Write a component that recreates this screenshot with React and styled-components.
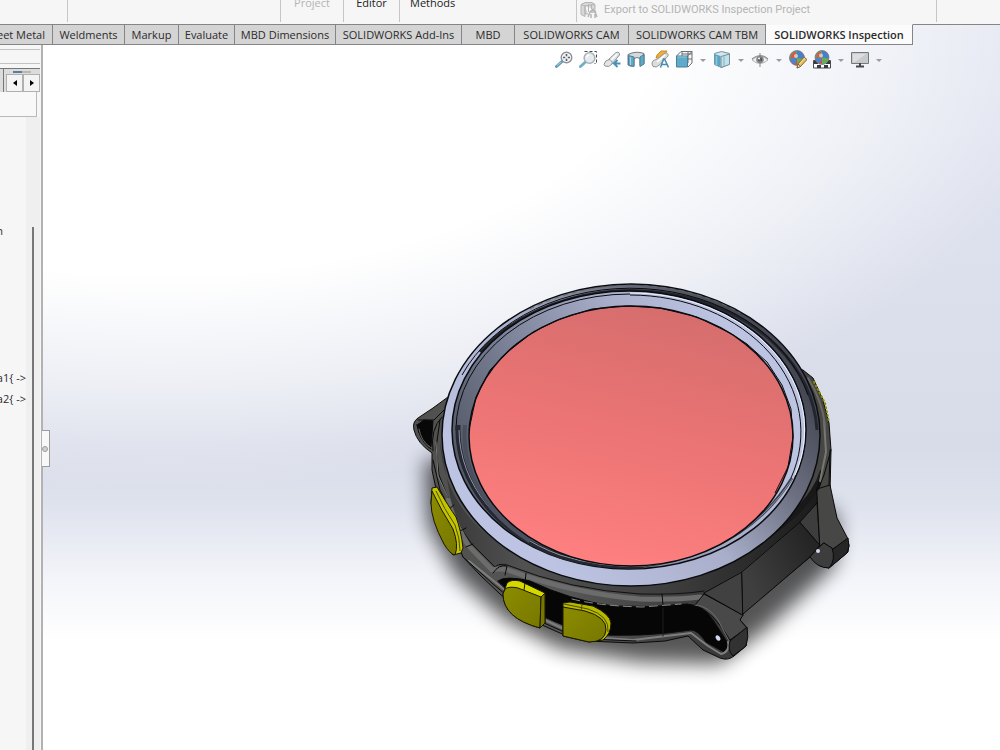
import styled, { createGlobalStyle, css } from "styled-components";

const GlobalStyle = createGlobalStyle`
*, *::after {
    box-sizing: border-box;
}
body {
    margin: 0;
    background: #ffffff;
    font-family: "Open Sans", "Noto Sans", sans-serif;
    font-size: 11px;
    color: #2b2b2b;
}
button {
    font: inherit;
    color: inherit;
    padding: 0;
    border: 0;
    background: none;
}
`

const Page = styled.div`
display: flex;
flex-direction: column;
min-height: 100vh;
overflow: hidden;
`

const Ribbon = styled.header`
display: flex;
height: 24px;
overflow: hidden;
background: #f6f6f6;
`

const RibbonGroup = styled.div`
display: flex;
flex: ${({ $width }) => ($width ? `0 0 ${$width}px` : "1")};
justify-content: ${({ $start }) => ($start ? "flex-start" : "center")};
align-items: flex-end;
height: 22px;
padding-left: ${({ $start }) => ($start ? "10px" : "0")};
border-right: ${({ $width }) => ($width ? "1px solid #c6c6c6" : "0")};
`

const RibbonLabel = styled.button`
line-height: 14px;
padding-bottom: 12px;
color: ${({ disabled }) => (disabled ? "#b4b4b4" : "#222222")};
`

const ExportButton = styled.button`
display: flex;
align-items: center;
gap: 6px;
margin-right: auto;
padding-left: 3px;
height: 22px;
line-height: 18px;
padding-bottom: 2px;
font-family: Roboto, sans-serif;
color: #b4b4b4;
`

const Workspace = styled.div`
display: flex;
flex-direction: column;
flex: 1;
background:
    radial-gradient(ellipse 92% 64% at 16% 0%, #ffffff 54%, rgba(255, 255, 255, 0.5) 79%, rgba(255, 255, 255, 0) 100%),
    linear-gradient(to bottom, #e2e6f1 0%, #d8dce9 58%, #dee2ed 66%, #f3f4f9 76%, #ffffff 85%);
`

const TabBar = styled.div`
display: flex;
height: 21px;
`

const Tab = styled.button`
display: flex;
flex: 0 0 ${({ $width }) => $width}px;
justify-content: ${({ $clipped }) => ($clipped ? "flex-end" : "center")};
align-items: center;
padding-right: ${({ $clipped }) => ($clipped ? "7px" : "0")};
overflow: hidden;
white-space: nowrap;
background: #d4d4d4;
border: solid #858585;
border-width: 1px 1px 1px 0;
${({ $active }) => $active && css`
    background: #fbfbfc;
    border-top-color: #f6f6f6;
    font-weight: 600;
`}
`

const TabRest = styled.div`
flex: 1;
border-top: 1px solid #858585;
`

const Main = styled.main`
display: flex;
flex: 1;
`

const SidePanel = styled.aside`
position: relative;
display: flex;
flex-direction: column;
flex: 0 0 43px;
background: #f6f6f6;
border-right: 2px solid #b2b2b2;
`

const PanelStrip = styled.div`
height: ${({ $height }) => $height}px;
margin-right: 1px;
border-bottom: 1px solid #c2c2c2;
`

const PanelTabs = styled.div`
display: flex;
height: 24px;
margin: 4px 1px 0 0;
border-top: 1px solid #777777;
background: #dcdcdc;
`

const PanelTabEnd = styled.div`
width: 4px;
border-right: 1px solid #777777;
`

const Scroller = styled.div`
display: flex;
flex: 1;
align-items: flex-end;
padding-left: 2px;
background: linear-gradient(to right, transparent 25%, #587f96 25%, #587f96 50%, #b8b8b0 50%, #b8b8b0 75%, transparent 75%) 0 2px / 100% 2px no-repeat;
`

const ScrollButton = styled.button`
flex: 1;
height: 18px;
border: 1px solid #b0b0b0;
background: #f4f4f4;

svg {
    display: block;
    margin: auto;
}
`

const FilterInput = styled.input`
width: 37px;
height: 25px;
padding: 0;
border: solid #b8b8b8;
border-width: 0 1px 1px 0;
background: #f8f8f8;
`

const TreeArea = styled.div`
display: flex;
flex: 1;
`

const Tree = styled.ul`
display: flex;
flex-direction: column;
flex: 0 0 26px;
margin: 0;
padding: 105px 0 0;
list-style: none;
overflow: hidden;
`

const TreeItem = styled.li`
display: flex;
justify-content: flex-end;
width: ${({ $cut }) => ($cut ? "3px" : "26px")};
height: 21px;
line-height: 18px;
white-space: nowrap;
`

const ScrollTrack = styled.div`
flex: 0 0 14px;
padding: 110px 6px 0 6px;
background: #efefef;
`

const ScrollThumb = styled.div`
width: 2px;
height: 100%;
background: #777777;
`

const PanelHandle = styled.button`
position: absolute;
top: 385px;
left: 42px;
width: 8px;
height: 37px;
border: 1px solid #9c9c9c;
border-left: 0;
background: #f8f8f8;

&::after {
    content: "";
    display: block;
    width: 6px;
    height: 6px;
    border: 1px solid #9c9c9c;
    border-radius: 50%;
    background: #d0d0d0;
}
`

const Viewport = styled.section`
position: relative;
flex: 1;
`

const Canvas = styled.svg`
position: absolute;
inset: 0;
width: 100%;
height: 100%;
`

const ViewToolbar = styled.div`
position: relative;
display: flex;
justify-content: flex-end;
gap: 6px;
padding: 5px 117px 0 0;
`

const ToolButton = styled.button`
width: 18px;
height: 20px;

svg {
    display: block;
}
`

const CaretButton = styled.button`
width: 8px;
height: 20px;

&::after {
    content: "";
    display: block;
    margin: 0 auto;
    width: 6px;
    border: 3px solid transparent;
    border-top-color: #9a9aa0;
    border-bottom: 0;
}
`

const tabs = [
    { text: "Sheet Metal", width: 53, clipped: true },
    { text: "Weldments", width: 72 },
    { text: "Markup", width: 54 },
    { text: "Evaluate", width: 56 },
    { text: "MBD Dimensions", width: 101 },
    { text: "SOLIDWORKS Add-Ins", width: 126 },
    { text: "MBD", width: 53 },
    { text: "SOLIDWORKS CAM", width: 114 },
    { text: "SOLIDWORKS CAM TBM", width: 137 },
    { text: "SOLIDWORKS Inspection", width: 147, active: true },
];

const treeItems = ["n", "", "", "", "", "", "", "a1{ ->", "a2{ ->"];

function Icon({ children }) {
    return <svg width="18" height="20" viewBox="0 0 18 20" fill="none" aria-hidden="true">{children}</svg>;
}

function ZoomFitIcon() {
    return (
        <Icon>
            <path d="M1.500 16.500 7 11.500" stroke="#5f9dba" strokeWidth="3" strokeLinecap="round" />
            <path d="M2 15.500 6 12" stroke="#a9d2e3" strokeWidth="1" />
            <circle cx="11.500" cy="7.500" r="5.300" fill="#f1f4f6" stroke="#8e9296" strokeWidth="1.400" />
            <path d="M11.500 4v2.200M11.500 8.800V11M8 7.500h2.200M12.800 7.500H15" stroke="#5c6065" strokeWidth="1.600" />
        </Icon>
    );
}

function ZoomAreaIcon() {
    return (
        <Icon>
            <path d="M5.500 1.500h12v12h-2" stroke="#44484c" strokeDasharray="3 2" />
            <path d="m1.500 16.500 5-4.500" stroke="#74adc7" strokeWidth="3" strokeLinecap="round" />
            <circle cx="10.500" cy="8" r="5.400" fill="#e4ebef" stroke="#a7adb1" strokeWidth="1.400" />
            <path d="M7.500 7.500a3.200 3.200 0 0 1 3-2.500" stroke="#ffffff" strokeWidth="1.400" />
        </Icon>
    );
}

function PreviousViewIcon() {
    return (
        <Icon>
            <path d="M5 10 13 2.500q4-1 3.500 2.500L9 14z" fill="#dfe1e2" stroke="#909498" />
            <path d="M1 14.500Q2 10 6 9.500q4 1 3 4.500-3 4-7 2z" fill="#e2e4e5" stroke="#909498" />
            <path d="m8 10 6-6" stroke="#ffffff" strokeWidth="1.500" />
            <path d="M17.500 13.500H11m3.500-3.500L11 13.500l3.500 3.500" stroke="#4b93b4" strokeWidth="2" />
        </Icon>
    );
}

function SectionIcon() {
    return (
        <Icon>
            <path d="M1 4.500q8-4 16-1v10l-4 2V8.500q-3-2-6 0V16q-4 1-6-1z" fill="#d5d9db" stroke="#73797d" />
            <path d="M1.500 5.500 7 7v9.500l-5.500-2zM13 7l4-2.500V14l-4 2.500z" fill="#62a9c8" stroke="#4b7f97" />
            <path d="M3.500 7v8" stroke="#a8d6e8" />
        </Icon>
    );
}

function AnnotationViewIcon() {
    return (
        <Icon>
            <path d="m6 5 4-4h6l-3 5h2l-8 6 2-4H5z" fill="#f2ad38" stroke="#c98b2c" />
            <path d="M1 14q0-4 4.500-4.500L14 3q4 0 3 3l-8 8.500q-4 4-7 2z" fill="#dddddc" stroke="#969694" />
            <path d="m6 12 8-7" stroke="#ffffff" strokeWidth="1.500" />
            <path d="m9.500 17.500 3-8.500h1l4 8.500m-7-3h5.500" stroke="#4a8cb0" strokeWidth="1.500" />
        </Icon>
    );
}

function OrientationIcon() {
    return (
        <Icon>
            <path d="M1.500 6 6 1.500h11V13l-4 4M17 1.500 12.500 6M7 2v4M13 2v11M7 4h10M13 9h4" fill="#f5f6f6" stroke="#6a6f73" />
            <path d="M1.500 6h11v11h-11z" fill="#60abc9" stroke="#4a7f98" />
            <path d="M2.500 7h9" stroke="#91cce0" />
        </Icon>
    );
}

function DisplayStyleIcon() {
    return (
        <Icon>
            <path d="m1.500 3.500 7-2 8 2V14l-8 3.500-7-3z" fill="#d4e6ec" stroke="#7a909b" />
            <path d="m1.500 4 6 2v11l-6-3z" fill="#5ba4c2" />
            <path d="M8 6.500 16.500 4v10.500L8 17.500z" fill="#c3dfe9" stroke="#7a909b" />
            <path d="M11 6v10M3.500 6v9" stroke="#8ec5d9" strokeWidth="1.500" />
        </Icon>
    );
}

function VisibilityIcon() {
    return (
        <Icon>
            <path d="M1 10q8-8 16 0-8 7-16 0z" fill="#f0f0f0" stroke="#b5b5b5" />
            <path d="M1 9q8-7 16 0" stroke="#8e9092" strokeWidth="1.200" />
            <circle cx="9" cy="9.500" r="3.800" fill="#84888b" />
            <circle cx="9" cy="9.500" r="2" fill="#3e4245" />
            <path d="M9 3v14" stroke="#85898b" />
            <circle cx="8" cy="8.500" r="1" fill="#ffffff" />
        </Icon>
    );
}

function ColorBall({ cx, cy, r }) {
    return (
        <>
            <circle cx={cx} cy={cy} r={r} fill="#db4a42" />
            <path d={`M${cx} ${cy}V${cy - r}A${r} ${r} 0 0 0 ${cx - r} ${cy + 1}z`} fill="#55ab62" />
            <path d={`M${cx} ${cy}V${cy - r}A${r} ${r} 0 0 1 ${cx + r} ${cy + 1}z`} fill="#497fc9" />
            <path d={`M${cx} ${cy}L${cx - r} ${cy + 1}A${r} ${r} 0 0 0 ${cx - 2} ${cy + r - 1}z`} fill="#4a85cc" />
            <path d={`M${cx} ${cy}L${cx + r} ${cy + 1}A${r} ${r} 0 0 1 ${cx} ${cy + r}z`} fill="#62ad5a" />
            <path d={`M${cx - 1} ${cy}V${cy - r + 1}A${r} ${r} 0 0 0 ${cx - r + 1} ${cy}z`} fill="#d8564e" />
            <circle cx={cx - 1} cy={cy - 2} r="2" fill="#ffffff" opacity="0.6" />
            <circle cx={cx} cy={cy} r={r} stroke="#7a7f88" strokeWidth="0.700" />
        </>
    );
}

function AppearanceIcon() {
    return (
        <Icon>
            <ColorBall cx={8} cy={8} r={7.500} />
            <path d="m8 18 1-4 6-7 3 2.500-6.500 7z" fill="#e7bd58" stroke="#7d6b47" />
            <path d="m8 18 1-4 2.500 2.500z" fill="#f0dec2" stroke="#594b37" strokeWidth="0.700" />
            <path d="m10.500 14 5.500-6" stroke="#ffe39b" />
        </Icon>
    );
}

function SceneIcon() {
    return (
        <Icon>
            <path d="M.5 10.500h17v7.500H.5z" fill="#ffffff" stroke="#454a4e" />
            <path d="M1 11h4v3H1zm12 0h4v3h-4zM4 15h4v3H4zm7 0h4v3h-4z" fill="#363b3e" />
            <ColorBall cx={9} cy={7.500} r={7} />
        </Icon>
    );
}

function MonitorIcon() {
    return (
        <Icon>
            <path d="M.5 2.500h17v11H.5z" fill="#c7cacb" stroke="#74787b" />
            <path d="m2 4 13 0-11 8H2z" fill="#dcdedf" />
            <path d="M9 13v3.500M5 16.500h8" stroke="#44484b" strokeWidth="2" />
        </Icon>
    );
}

const tools = [
    { label: "Zoom to Fit", icon: ZoomFitIcon },
    { label: "Zoom to Area", icon: ZoomAreaIcon },
    { label: "Previous View", icon: PreviousViewIcon },
    { label: "Section View", icon: SectionIcon },
    { label: "Dynamic Annotation Views", icon: AnnotationViewIcon },
    { label: "View Orientation", icon: OrientationIcon, menu: true },
    { label: "Display Style", icon: DisplayStyleIcon, menu: true },
    { label: "Hide/Show Items", icon: VisibilityIcon, menu: true },
    { label: "Edit Appearance", icon: AppearanceIcon },
    { label: "Apply Scene", icon: SceneIcon, menu: true },
    { label: "View Settings", icon: MonitorIcon, menu: true },
];

function WatchGradients() {
    return (
        <defs>
            <linearGradient id="glass" x1="0.35" y1="1" x2="0.65" y2="0">
                <stop offset="0" stopColor="#ff8080" />
                <stop offset="0.5" stopColor="#ec7474" />
                <stop offset="1" stopColor="#d56d6d" />
            </linearGradient>
            <linearGradient id="bezel" gradientUnits="userSpaceOnUse" x1="530" y1="540" x2="760" y2="340">
                <stop offset="0" stopColor="#bdc4e3" />
                <stop offset="0.45" stopColor="#a9afca" />
                <stop offset="0.75" stopColor="#6c7081" />
                <stop offset="1" stopColor="#454853" />
            </linearGradient>
            <linearGradient id="ledge" gradientUnits="userSpaceOnUse" x1="460" y1="460" x2="720" y2="320">
                <stop offset="0" stopColor="#555a68" />
                <stop offset="0.35" stopColor="#7e849a" />
                <stop offset="0.7" stopColor="#a8aeca" />
                <stop offset="1" stopColor="#bcc4e2" />
            </linearGradient>
            <linearGradient id="case" x1="0" y1="0" x2="1" y2="0">
                <stop offset="0" stopColor="#50504f" />
                <stop offset="0.35" stopColor="#565656" />
                <stop offset="0.7" stopColor="#383838" />
                <stop offset="1" stopColor="#4a4a48" />
            </linearGradient>
            <linearGradient id="underside" gradientUnits="userSpaceOnUse" x1="450" y1="0" x2="815" y2="0">
                <stop offset="0" stopColor="#3a3a3a" />
                <stop offset="0.2" stopColor="#515151" />
                <stop offset="0.6" stopColor="#3e3e3e" />
                <stop offset="1" stopColor="#1c1c1c" />
            </linearGradient>
            <linearGradient id="strap" gradientUnits="userSpaceOnUse" x1="745" y1="575" x2="812" y2="540">
                <stop offset="0" stopColor="#3f3f3f" />
                <stop offset="1" stopColor="#242424" />
            </linearGradient>
            <linearGradient id="yellow" x1="0" y1="0" x2="1" y2="1">
                <stop offset="0" stopColor="#8c8c00" />
                <stop offset="1" stopColor="#777700" />
            </linearGradient>
            <filter id="blur" x="-20%" y="-20%" width="140%" height="140%">
                <feGaussianBlur stdDeviation="10" />
            </filter>
        </defs>
    );
}

function WatchCase() {
    return (
        <g strokeLinejoin="round" strokeLinecap="round" stroke="#0a0a0a">
            <path d="M448 397 433 408 418 418Q412 422 414 430 417 443 432 453L432 470 437 493 463 557 480 575 500 594 533 621 560 633 587 641 633 643 665 641 688 636 703 650 720 658Q728 661 734 656L746 646 747 628 740 620 743 613 810 557 820 566 829 568 848 552 849 545 837 520 830 493 831 450 829 423 823 400 813 378 803 370z" fill="url(#case)" />

            <path d="M417 425 424 420 433 421 431 447Q419 440 417 425z" fill="#080808" />
            <path d="M418 420 434 420 444 410M433 451Q430 429 442 417M419 432Q423 444 431 449" fill="none" />
            <path d="M419 429Q421 441 430 447" fill="none" stroke="#666666" />
            <path d="M440 420 436 448 439 475 452 508 466 539M433 460 440 490 458 524 471 548" fill="none" />
            <path d="M436 442 438 476 452 506" fill="none" stroke="#777777" />

            <path d="M440 440Q443 500 489 536 550 586 631 587 705 585 760 541 810 505 820 470L818 507 800 522 742 571 704 592 640 595 580 588 527 573 503 565 497 570 470 545 452 507z" fill="url(#underside)" stroke="none" />
            <path d="M448 497Q456 523 471 543L495 567Q499 563 507 565 570 590 640 594 680 595 704 591" fill="none" stroke="#111111" />
            <path d="M448 500Q454 522 468 545L492 570Q499 568 508 570 571 593 640 599 675 600 700 597" fill="none" stroke="#6c6c6c" strokeWidth="5" />
            <path d="M449 509 454 505M460 531 466 528M466 547 473 544M493 573Q499 564 507 566L505 575M525 583 526 573M662 594 663 605" fill="none" />
            <path d="M818 484Q808 503 783 524 748 552 707 570" fill="none" stroke="#181818" strokeWidth="6" />

            <path d="M498 581Q505 575 530 581 570 600 613 606 650 608 687 604 703 605 713 620L729 645 724 652 706 642Q698 630 691 630 640 638 587 634 560 625 525 608z" fill="#060606" />
            <path d="M469 561 500 586 534 615 562 628 590 637 633 640 666 636 691 633 708 646 721 654Q730 652 728 642" fill="none" stroke="#7e7e7c" strokeWidth="2" />
            <path d="M463 557 493 584 535 619 562 631 590 639 636 641" fill="none" />
            <path d="M572 599Q600 606 642 607L681 604" fill="none" stroke="#8b8b8b" strokeDasharray="8 5" />
            <path d="M663 608V636" fill="none" stroke="#1e1e1e" />

            <path d="M695 605 704 594 743 615 740 620 747 628 730 640Q713 611 695 605z" fill="#494949" />
            <path d="M730 641 747 627Q749 637 746 646L733 656Q727 650 730 641z" fill="#323232" />
            <path d="M695 605Q709 606 718 620L729 641" fill="none" stroke="#6c6c6c" strokeWidth="1" />
            <path d="M704 593 742 572 743 615z" fill="#414141" />
            <path d="M742 572 800 522 820 545 810 557 743 614z" fill="url(#strap)" />
            <path d="M800 522 817 503 820 545z" fill="#3d3d3d" />
            <path d="M817 489 830 485 837 518 848 539 833 549 824 543 820 546z" fill="#474746" />
            <path d="M833 549 848 538 849 546 847 553 829 568z" fill="#262626" />
            <path d="M824 543 832 548Q836 560 829 568 817 568 810 557z" fill="#3d3d3d" />
            <path d="M818 490 824 475 831 450M821 470 817 491M829 485 830 450" fill="none" />
            <path d="M824 420 826 452 820 481" fill="none" stroke="#777772" strokeWidth="2" />
            <path d="M808 378Q822 400 825 425" fill="none" stroke="#6a6a64" strokeWidth="2" />
            <path d="M814 382 825 403 829 422" fill="none" stroke="#8c8c00" strokeWidth="2" strokeDasharray="1 3" />
            <circle cx="818" cy="551" r="2" fill="#d4d8ee" stroke="none" />
            <ellipse cx="718" cy="638" rx="2" ry="3" fill="#d4d8ee" stroke="none" transform="rotate(-35 718 638)" />
        </g>
    );
}

function WatchButtons() {
    return (
        <g stroke="#171700" strokeLinejoin="round">
            <path d="M432 488 437 487Q449 507 456 517 461 530 463 548L461 553 453 555Q438 538 431 503z" fill="#c3c300" />
            <path d="M432 491Q441 510 453 529 459 545 455 555 450 554 444 544 431 520 431 503z" fill="url(#yellow)" />
            <path d="M436 491Q444 509 455 525 460 538 460 551" fill="none" stroke="#4d4d00" />
            <path d="M507 583Q511 579 520 581L545 593 545 623 540 628Q503 618 503 594z" fill="#d7d700" />
            <path d="M505 589Q509 586 518 588L541 597 540 628Q503 618 503 594z" fill="url(#yellow)" />
            <path d="M541 597 545 593 545 623 540 628z" fill="#777700" />
            <path d="M525 583 524 590" />
            <path d="M563 603 570 602 593 606Q610 614 611 623 611 634 603 640L589 642 563 636z" fill="#b8b800" />
            <path d="M563 607 585 611Q607 617 606 630 605 642 589 642L563 636z" fill="url(#yellow)" />
            <path d="M564 604 588 609Q610 616 608 632M582 605 581 611" fill="none" stroke="#4d4d00" />
        </g>
    );
}

function WatchBezel() {
    return (
        <g stroke="#0b0c10" fill="none">
            <ellipse cx="631" cy="435" rx="189" ry="151" fill="url(#bezel)" strokeWidth="1.500" />
            <path d="M480 352A186 147 0 0 1 817 430" stroke="#24262d" strokeWidth="3" />
            <path d="M530 309A186 147 0 0 1 740 313" stroke="#5f645f" strokeDasharray="5 4" />
            <path d="M462 375A184 145 0 0 1 808 395" strokeWidth="1" />
            <ellipse cx="629" cy="430" rx="177" ry="139" fill="url(#ledge)" strokeWidth="1.500" />
            <path d="M456 430A174 136 0 0 1 630 294" />
            <path d="M630 293A174 137 0 0 1 795 475" stroke="#eef1fc" />
            <path d="M630 295A171 137 0 0 1 791 478" />
            <path d="M458 425A172 139 0 0 0 560 556Q600 568 644 566" stroke="#252831" strokeWidth="5" />
            <path d="M644 566Q745 553 792 478" stroke="#3c404c" strokeWidth="3" />
            <path d="M459 430A171 138 0 0 0 560 555Q600 568 644 566 745 553 793 478" stroke="#8e94a8" />
            <path d="M465 425A166 133 0 0 0 530 541" stroke="#4b505e" strokeWidth="4" />
            <ellipse cx="631" cy="436" rx="162" ry="130" fill="url(#glass)" strokeWidth="1.500" />
            <path d="M469 430 476 397 490 370 510 350 533 332 560 319 592 309 627 306 660 308 697 317 730 333 747 344 767 362 782 385 791 409 793 437 788 467 775 493" />
        </g>
    );
}

function Watch() {
    return (
        <Canvas viewBox="43 45 957 705" role="img" aria-label="Watch assembly">
            <WatchGradients />
            <path d="M425 460 428 525 455 575 505 620 560 649 640 662 720 664 765 630 835 565 838 515 700 450z" opacity="0.66" filter="url(#blur)" />
            <WatchCase />
            <WatchButtons />
            <WatchBezel />
        </Canvas>
    );
}

function App() {
    return (
        <>
            <GlobalStyle />
            <Page>
                <Ribbon>
                    <RibbonGroup $width={68} />
                    <RibbonGroup $width={213} />
                    <RibbonGroup $width={63}><RibbonLabel disabled>Project</RibbonLabel></RibbonGroup>
                    <RibbonGroup $width={56}><RibbonLabel>Editor</RibbonLabel></RibbonGroup>
                    <RibbonGroup $width={177} $start><RibbonLabel>Methods</RibbonLabel></RibbonGroup>
                    <RibbonGroup $width={360}>
                        <ExportButton disabled>
                            <svg width="18" height="18" viewBox="0 0 18 18" fill="none" stroke="#b5b5b5" aria-hidden="true">
                                <path d="M1 3.500 5 1.500h7l3 2v5M1 3.500v10l4 2V5zM5 5l10-1.500M5 5v8h3" fill="#d8d8d8" />
                                <path d="M8.500 3v8M11.500 3v5" />
                                <path d="m8 16 2-5h5l2 5m-7-5 3-3 3 3m-5 2v4m4-4v4" strokeWidth="1.500" />
                            </svg>
                            Export to SOLIDWORKS Inspection Project
                        </ExportButton>
                    </RibbonGroup>
                    <RibbonGroup />
                </Ribbon>
                <Workspace>
                    <TabBar role="tablist">
                        {tabs.map((tab) => (
                            <Tab key={tab.text} role="tab" aria-selected={!!tab.active} $width={tab.width} $active={tab.active} $clipped={tab.clipped}>
                                {tab.text}
                            </Tab>
                        ))}
                        <TabRest />
                    </TabBar>
                    <Main>
                        <SidePanel>
                            <PanelStrip $height={5} />
                            <PanelStrip $height={14} />
                            <PanelTabs>
                                <PanelTabEnd />
                                <Scroller>
                                    <ScrollButton aria-label="Scroll left">
                                        <svg width="4" height="6" viewBox="0 0 4 6"><path d="M4 0v6L0 3z" /></svg>
                                    </ScrollButton>
                                    <ScrollButton aria-label="Scroll right">
                                        <svg width="4" height="6" viewBox="0 0 4 6"><path d="M0 0v6l4-3z" /></svg>
                                    </ScrollButton>
                                </Scroller>
                            </PanelTabs>
                            <FilterInput aria-label="Filter" />
                            <TreeArea>
                                <Tree>
                                    {treeItems.map((item, i) => (
                                        <TreeItem key={i} $cut={item === "n"}>{item}</TreeItem>
                                    ))}
                                </Tree>
                                <ScrollTrack><ScrollThumb /></ScrollTrack>
                            </TreeArea>
                            <PanelHandle aria-label="Collapse panel" />
                        </SidePanel>
                        <Viewport>
                            <Watch />
                            <ViewToolbar role="toolbar">
                                {tools.map(({ label, icon: ToolIcon, menu }) => [
                                    <ToolButton key={label} aria-label={label}><ToolIcon /></ToolButton>,
                                    menu && <CaretButton key={`${label} menu`} aria-label={`${label} menu`} />,
                                ])}
                            </ViewToolbar>
                        </Viewport>
                    </Main>
                </Workspace>
            </Page>
        </>
    );
}

export default App;
